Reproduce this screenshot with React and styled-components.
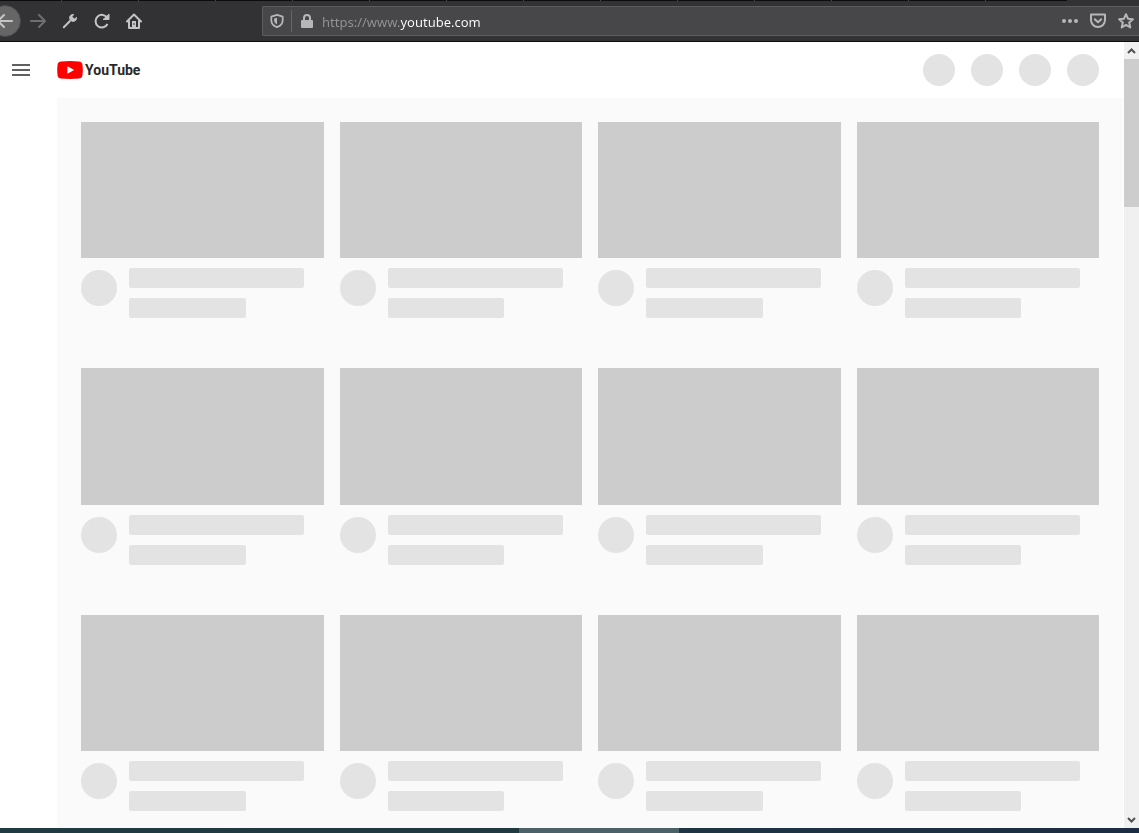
import React from "react";
import styled, { createGlobalStyle } from "styled-components";

const GlobalStyle = createGlobalStyle`
  * { box-sizing: border-box; }
  body { margin: 0; background: #fff; font-family: "Open Sans", "Noto Sans", sans-serif; }
  button { font: inherit; }
`;

const Screen = styled.div`
  display: flex;
  flex-direction: column;
  height: 100vh;
  overflow: hidden;
`;

const TabStrip = styled.div`
  display: flex;
  flex: none;
  height: 1px;
  padding-right: 72px;
  background: #323234;
`;

const TabEdge = styled.div`
  flex: ${(p) => (p.$first ? "0 0 62px" : p.$last ? "1" : "0 0 77px")};
  border-right: ${(p) => (p.$last ? "none" : "1px solid #4a4a4c")};
  background: #0c0c0d;
`;

const Toolbar = styled.div`
  display: flex;
  align-items: center;
  flex: none;
  height: 41px;
  background: #323234;
  border-bottom: 1px solid #0c0c0d;
`;

const NavButtons = styled.nav`
  display: flex;
  flex: none;
  width: 262px;
  margin-left: -11px;
  margin-right: 11px;
`;

const ToolButton = styled.button`
  display: flex;
  align-items: center;
  justify-content: center;
  flex: none;
  width: ${(p) => p.$width || 32}px;
  height: 32px;
  padding: 0;
  border: ${(p) => (p.$round ? "1px solid #4a4a4b" : "none")};
  border-radius: 16px;
  background: ${(p) => (p.$round ? "#666667" : "transparent")};
  color: ${(p) => (p.$disabled ? "#6f6f71" : p.$soft ? "#b7b7b8" : "#c4c4c5")};
`;

const UrlBar = styled.div`
  display: flex;
  align-items: center;
  flex: 1;
  height: 30px;
  border: 1px solid #5c5c5e;
  border-right: none;
  border-radius: 2px 0 0 2px;
  background: #474749;
`;

const Separator = styled.span`
  width: 1px;
  height: 22px;
  background: #5f6670;
`;

const UrlInput = styled.input`
  flex: 1;
  min-width: 0;
  height: 24px;
  margin-left: 1px;
  padding: 2px 0 0;
  border: none;
  outline: none;
  font: 13px/22px "Noto Sans", "Open Sans", sans-serif;
  color: #fff;
  background: linear-gradient(90deg, #949496 78px, #fff 78px);
  -webkit-background-clip: text;
  background-clip: text;
  -webkit-text-fill-color: transparent;
`;

const Viewport = styled.div`
  display: flex;
  flex: 1;
  min-height: 0;
`;

const Site = styled.div`
  display: flex;
  flex-direction: column;
  flex: 1;
  min-width: 0;
  overflow: hidden;
`;

const Masthead = styled.header`
  display: flex;
  align-items: center;
  flex: none;
  height: 56px;
  padding: 0 25px 0 12px;
  background: #fff;
`;

const MenuButton = styled.button`
  display: flex;
  width: 18px;
  padding: 0;
  border: none;
  background: none;
`;

const Logo = styled.a`
  display: flex;
  align-items: center;
  gap: 2px;
  margin-left: 27px;
  color: #282828;
  font: bold 14px/20px Roboto, "Liberation Sans", sans-serif;
  text-decoration: none;
`;

const Actions = styled.div`
  display: flex;
  gap: 16px;
  margin-left: auto;
`;

const Circle = styled.span`
  flex: none;
  width: ${(p) => p.$size}px;
  height: ${(p) => p.$size}px;
  border-radius: 50%;
  background: #e3e3e3;
`;

const Feed = styled.main`
  display: grid;
  grid-template-columns: repeat(4, 1fr);
  align-content: start;
  gap: 50px 16px;
  flex: 1;
  min-height: 0;
  margin: 0 1px 0 57px;
  padding: 24px 24px 0;
  background: #fafafa;
`;

const Card = styled.article`
  min-width: 0;
`;

const Thumbnail = styled.div`
  aspect-ratio: 16 / 9;
  background: #ccc;
`;

const Details = styled.div`
  display: flex;
  align-items: center;
  gap: 12px;
  padding-top: 10px;
`;

const Avatar = styled(Circle)`
  align-self: flex-start;
  margin-top: 2px;
`;

const Lines = styled.div`
  display: flex;
  flex-direction: column;
  flex: 1;
  gap: 10px;
`;

const Line = styled.span`
  width: ${(p) => p.$width};
  height: 20px;
  border-radius: 2px;
  background: #e3e3e3;
`;

const ScrollBar = styled.div`
  display: flex;
  flex-direction: column;
  flex: none;
  width: 15px;
  background: #f0f0f0;
`;

const ScrollButton = styled.button`
  display: flex;
  align-items: center;
  justify-content: center;
  height: 17px;
  padding: 0;
  border: none;
  background: #f0f0f0;
  color: #505050;
`;

const ScrollTrack = styled.div`
  flex: 1;
`;

const ScrollThumb = styled.div`
  height: 148px;
  background: #cdcdcd;
`;

const Taskbar = styled.footer`
  display: flex;
  justify-content: center;
  flex: none;
  height: 5px;
  padding-left: 59px;
  background: linear-gradient(90deg, #213b42, #20383f 45%, #1e3343 65%, #1c2c42);
`;

const TaskbarItem = styled.div`
  width: 160px;
  background: #4c6068;
`;

const Stroke = ({ size = 16, width = 2, children }) => (
  <svg width={size} height={size} viewBox="0 0 16 16" fill="none" stroke="currentColor"
    strokeWidth={width} strokeLinecap="round" strokeLinejoin="round" aria-hidden="true">
    {children}
  </svg>
);

const ArrowLeft = () => <Stroke><path d="M15 8H1.5M7 2 1 8l6 6" /></Stroke>;
const ArrowRight = () => <Stroke><path d="M1 8h13.5M9 2l6 6-6 6" /></Stroke>;
const Wrench = () => (
  <Stroke>
    <path d="M1.800 14.200 8 8" />
    <path d="M11.500 1.500C8.500 1 6.800 4 8 6.500L9.500 8c2.500 1.200 5.500-.5 5-3.500L12.300 6 10 3.800z" fill="currentColor" strokeWidth="1" />
  </Stroke>
);
const Reload = () => (
  <Stroke>
    <path d="M13.300 5A6.300 6.300 0 1 0 13.500 11" strokeLinecap="butt" />
    <path d="M15 1.500v5H9.500z" fill="currentColor" strokeWidth="1" />
  </Stroke>
);
const Home = () => (
  <Stroke>
    <path d="M1 8.500 8 1.500l7 7M3 8v7h10V8" />
    <path d="M6 8h4v6H6z" fill="currentColor" stroke="none" />
    <path d="M8 10.500v1" stroke="#323234" strokeWidth="1" />
  </Stroke>
);
const Shield = () => (
  <svg width="14" height="14" viewBox="0 0 16 16" fill="none" stroke="#b7b7b8" strokeWidth="2" aria-hidden="true">
    <path d="M8 1 14.500 3v4c0 4-2.500 6.500-6.500 8-4-1.500-6.500-4-6.500-8V3z" strokeLinejoin="round" />
    <path d="M8 4.200v7.600C5.500 10.500 4.700 9 4.700 7V5.200z" fill="#b7b7b8" stroke="none" />
  </svg>
);
const Lock = () => (
  <svg width="12" height="14" viewBox="0 0 12 14" aria-hidden="true">
    <path d="M3 7V4a3 3 0 0 1 6 0v3" fill="none" stroke="#b7b7b8" strokeWidth="2" />
    <rect y="6" width="12" height="8" rx="1" fill="#b7b7b8" />
  </svg>
);
const Dots = () => (
  <svg width="16" height="4" viewBox="0 0 16 4" fill="currentColor" aria-hidden="true">
    <circle cx="2" cy="2" r="2" /><circle cx="8" cy="2" r="2" /><circle cx="14" cy="2" r="2" />
  </svg>
);
const Pocket = () => (
  <Stroke><path d="M1 1.500h14V7a7 7 0 0 1-14 0zM4.800 6.200 8 9.200l3.200-3" /></Stroke>
);
const Star = () => (
  <Stroke><path d="m8 1.200 2 4.500 4.900.5-3.700 3.300 1.100 4.900L8 11.900l-4.300 2.500 1.100-4.900L1.100 6.200l4.900-.5z" /></Stroke>
);
const PlayBadge = () => (
  <svg width="26" height="18" viewBox="0 0 26 18" aria-hidden="true">
    <path d="M4 .4Q13-.4 22 .4 25 .6 25.400 3.500 26.200 9 25.400 14.500 25 17.400 22 17.600 13 18.400 4 17.600 1 17.400.6 14.500-.2 9 .6 3.500 1 .6 4 .4z" fill="#f00" />
    <path d="m10.400 5.200 6.800 3.800-6.800 3.800z" fill="#fff" />
  </svg>
);
const Chevron = ({ down }) => (
  <svg width="9" height="6" viewBox="0 0 9 6" fill="none" stroke="currentColor" strokeWidth="2" aria-hidden="true">
    <path d={down ? "m1 1 3.500 3.500L8 1" : "m1 5 3.500-3.500L8 5"} />
  </svg>
);

const tabs = Array.from({ length: 14 }, (_, i) => i);
const videos = Array.from({ length: 12 }, (_, i) => i);

export default function App() {
  return (
    <Screen>
      <GlobalStyle />
      <TabStrip>
        {tabs.map((i) => <TabEdge key={i} $first={i === 0} $last={i === tabs.length - 1} />)}
      </TabStrip>
      <Toolbar>
        <NavButtons aria-label="Browser">
          <ToolButton $round aria-label="Back"><ArrowLeft /></ToolButton>
          <ToolButton $disabled $width={33} aria-label="Forward"><ArrowRight /></ToolButton>
          <ToolButton aria-label="Tools"><Wrench /></ToolButton>
          <ToolButton aria-label="Reload"><Reload /></ToolButton>
          <ToolButton aria-label="Home"><Home /></ToolButton>
        </NavButtons>
        <UrlBar>
          <ToolButton $width={28} aria-label="Tracking protection"><Shield /></ToolButton>
          <Separator />
          <ToolButton $width={29} aria-label="Connection security"><Lock /></ToolButton>
          <UrlInput aria-label="Address" defaultValue="https://www.youtube.com" />
          <ToolButton $soft $width={28} aria-label="Page actions"><Dots /></ToolButton>
          <ToolButton $soft $width={28} aria-label="Save to Pocket"><Pocket /></ToolButton>
          <ToolButton $soft $width={27} aria-label="Bookmark"><Star /></ToolButton>
        </UrlBar>
      </Toolbar>
      <Viewport>
        <Site>
          <Masthead>
            <MenuButton aria-label="Guide">
              <svg width="18" height="12" viewBox="0 0 18 12" fill="#606060" aria-hidden="true">
                <path d="M0 0h18v2H0zM0 5h18v2H0zM0 10h18v2H0z" />
              </svg>
            </MenuButton>
            <Logo href="#"><PlayBadge />YouTube</Logo>
            <Actions>
              {[0, 1, 2, 3].map((i) => <Circle key={i} $size={32} />)}
            </Actions>
          </Masthead>
          <Feed>
            {videos.map((i) => (
              <Card key={i}>
                <Thumbnail />
                <Details>
                  <Avatar $size={36} />
                  <Lines>
                    <Line $width="90%" />
                    <Line $width="60%" />
                  </Lines>
                </Details>
              </Card>
            ))}
          </Feed>
        </Site>
        <ScrollBar>
          <ScrollButton aria-label="Scroll up"><Chevron /></ScrollButton>
          <ScrollTrack><ScrollThumb /></ScrollTrack>
          <ScrollButton aria-label="Scroll down"><Chevron down /></ScrollButton>
        </ScrollBar>
      </Viewport>
      <Taskbar><TaskbarItem /></Taskbar>
    </Screen>
  );
}
